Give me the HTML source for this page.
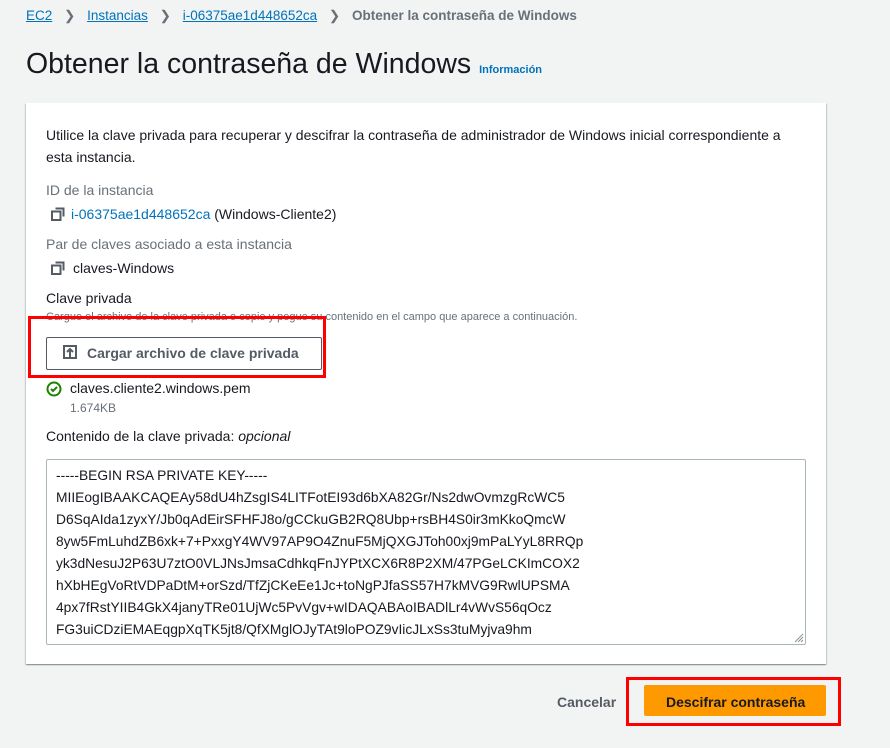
<!DOCTYPE html>
<html><head><meta charset="utf-8"><style>
body{margin:0;width:890px;height:748px;background:#f2f3f3;font-family:"Liberation Sans",sans-serif;color:#16191f;position:relative;overflow:hidden}
.a{position:absolute;white-space:nowrap}
.l{color:#0073bb}
.u{text-decoration:underline}
.g{color:#687078}
.card{position:absolute;left:26px;top:103px;width:800px;height:561px;background:#fff;box-shadow:0 1px 1px rgba(0,28,36,.3),1px 1px 1px rgba(0,28,36,.15),-1px 1px 1px rgba(0,28,36,.15)}
.f14{font-size:14px}
.ta{position:absolute;left:46px;top:459px;width:758px;height:184px;border:1px solid #aab7b8;background:#fff;border-radius:2px}
.ta div{position:absolute;left:9px;font-size:13.8px}
.red{position:absolute;border:3px solid #f00}
</style></head><body>
<div class="a" style="left:26px;top:8px;font-size:13.5px"><span class="l u">EC2</span> <span class="g" style="margin:0 8px">&#x276F;</span> <span class="l u">Instancias</span> <span class="g" style="margin:0 8px">&#x276F;</span> <span class="l u">i-06375ae1d448652ca</span> <span class="g" style="margin:0 8px">&#x276F;</span> <b class="g">Obtener la contraseña de Windows</b></div>
<div class="a" style="left:26px;top:48px;font-size:28.5px">Obtener la contraseña de Windows <b class="l" style="font-size:11px">Información</b></div>
<div class="card"></div>
<div class="a f14" style="left:46px;top:124px;line-height:22px">Utilice la clave privada para recuperar y descifrar la contraseña de administrador de Windows inicial correspondiente a<br>esta instancia.</div>
<div class="a f14 g" style="left:46px;top:182px">ID de la instancia</div>
<svg class="a" style="left:51px;top:207px" width="14" height="14" viewBox="0 0 14 14"><path d="M1 4.5h8.5v8.5H1z M4.5 1.5h8v8" fill="none" stroke="#545b64" stroke-width="2"/></svg>
<div class="a f14" style="left:71px;top:206px"><span class="l">i-06375ae1d448652ca</span> (Windows-Cliente2)</div>
<div class="a f14 g" style="left:46px;top:236px">Par de claves asociado a esta instancia</div>
<svg class="a" style="left:51px;top:261px" width="14" height="14" viewBox="0 0 14 14"><path d="M1 4.5h8.5v8.5H1z M4.5 1.5h8v8" fill="none" stroke="#545b64" stroke-width="2"/></svg>
<div class="a f14" style="left:73px;top:260px">claves-Windows</div>
<div class="a f14" style="left:46px;top:290px">Clave privada</div>
<div class="a g" style="left:46px;top:311px;font-size:11px">Cargue el archivo de la clave privada o copie y pegue su contenido en el campo que aparece a continuación.</div>
<div class="a" style="left:46px;top:337px;width:274px;height:31px;border:1px solid #545b64;border-radius:2px;background:#fff"></div>
<svg class="a" style="left:63px;top:345px" width="14" height="14" viewBox="0 0 14 14"><path d="M1 1h12v12H1z M7 12V4 M4 7l3-3 3 3" fill="none" stroke="#545b64" stroke-width="2"/></svg>
<b class="a f14" style="left:87px;top:345px;color:#545b64">Cargar archivo de clave privada</b>
<div class="red" style="left:28px;top:316px;width:292px;height:56px"></div>
<svg class="a" style="left:46px;top:381px" width="16" height="16" viewBox="0 0 16 16"><circle cx="8" cy="8" r="6.5" fill="none" stroke="#1d8102" stroke-width="2"/><path d="M5 8l2 2 4-4" fill="none" stroke="#1d8102" stroke-width="2"/></svg>
<div class="a f14" style="left:70px;top:380px">claves.cliente2.windows.pem</div>
<div class="a g" style="left:70px;top:401px;font-size:12px">1.674KB</div>
<div class="a f14" style="left:46px;top:428px">Contenido de la clave privada: <i>opcional</i></div>
<div class="ta">
<div style="top:8px">-----BEGIN RSA PRIVATE KEY-----</div>
<div style="top:30px">MIIEogIBAAKCAQEAy58dU4hZsgIS4LITFotEI93d6bXA82Gr/Ns2dwOvmzgRcWC5</div>
<div style="top:52px">D6SqAIda1zyxY/Jb0qAdEirSFHFJ8o/gCCkuGB2RQ8Ubp+rsBH4S0ir3mKkoQmcW</div>
<div style="top:74px">8yw5FmLuhdZB6xk+7+PxxgY4WV97AP9O4ZnuF5MjQXGJToh00xj9mPaLYyL8RRQp</div>
<div style="top:96px">yk3dNesuJ2P63U7ztO0VLJNsJmsaCdhkqFnJYPtXCX6R8P2XM/47PGeLCKImCOX2</div>
<div style="top:118px">hXbHEgVoRtVDPaDtM+orSzd/TfZjCKeEe1Jc+toNgPJfaSS57H7kMVG9RwlUPSMA</div>
<div style="top:140px">4px7fRstYIIB4GkX4janyTRe01UjWc5PvVgv+wIDAQABAoIBADlLr4vWvS56qOcz</div>
<div style="top:162px">FG3uiCDziEMAEqgpXqTK5jt8/QfXMglOJyTAt9loPOZ9vIicJLxSs3tuMyjva9hm</div>
<svg style="position:absolute;right:1px;bottom:1px" width="10" height="10" viewBox="0 0 10 10"><path d="M9 1L1 9M9 4L4 9M9 7L7 9" stroke="#879596" stroke-width="1"/></svg>
</div>
<b class="a f14" style="left:557px;top:694px;color:#545b64">Cancelar</b>
<div class="a" style="left:644px;top:685px;width:182px;height:31px;background:#ff9900;border-radius:2px"></div>
<b class="a f14" style="left:666px;top:694px">Descifrar contraseña</b>
<div class="red" style="left:626px;top:677px;width:209px;height:43px"></div>
</body></html>
